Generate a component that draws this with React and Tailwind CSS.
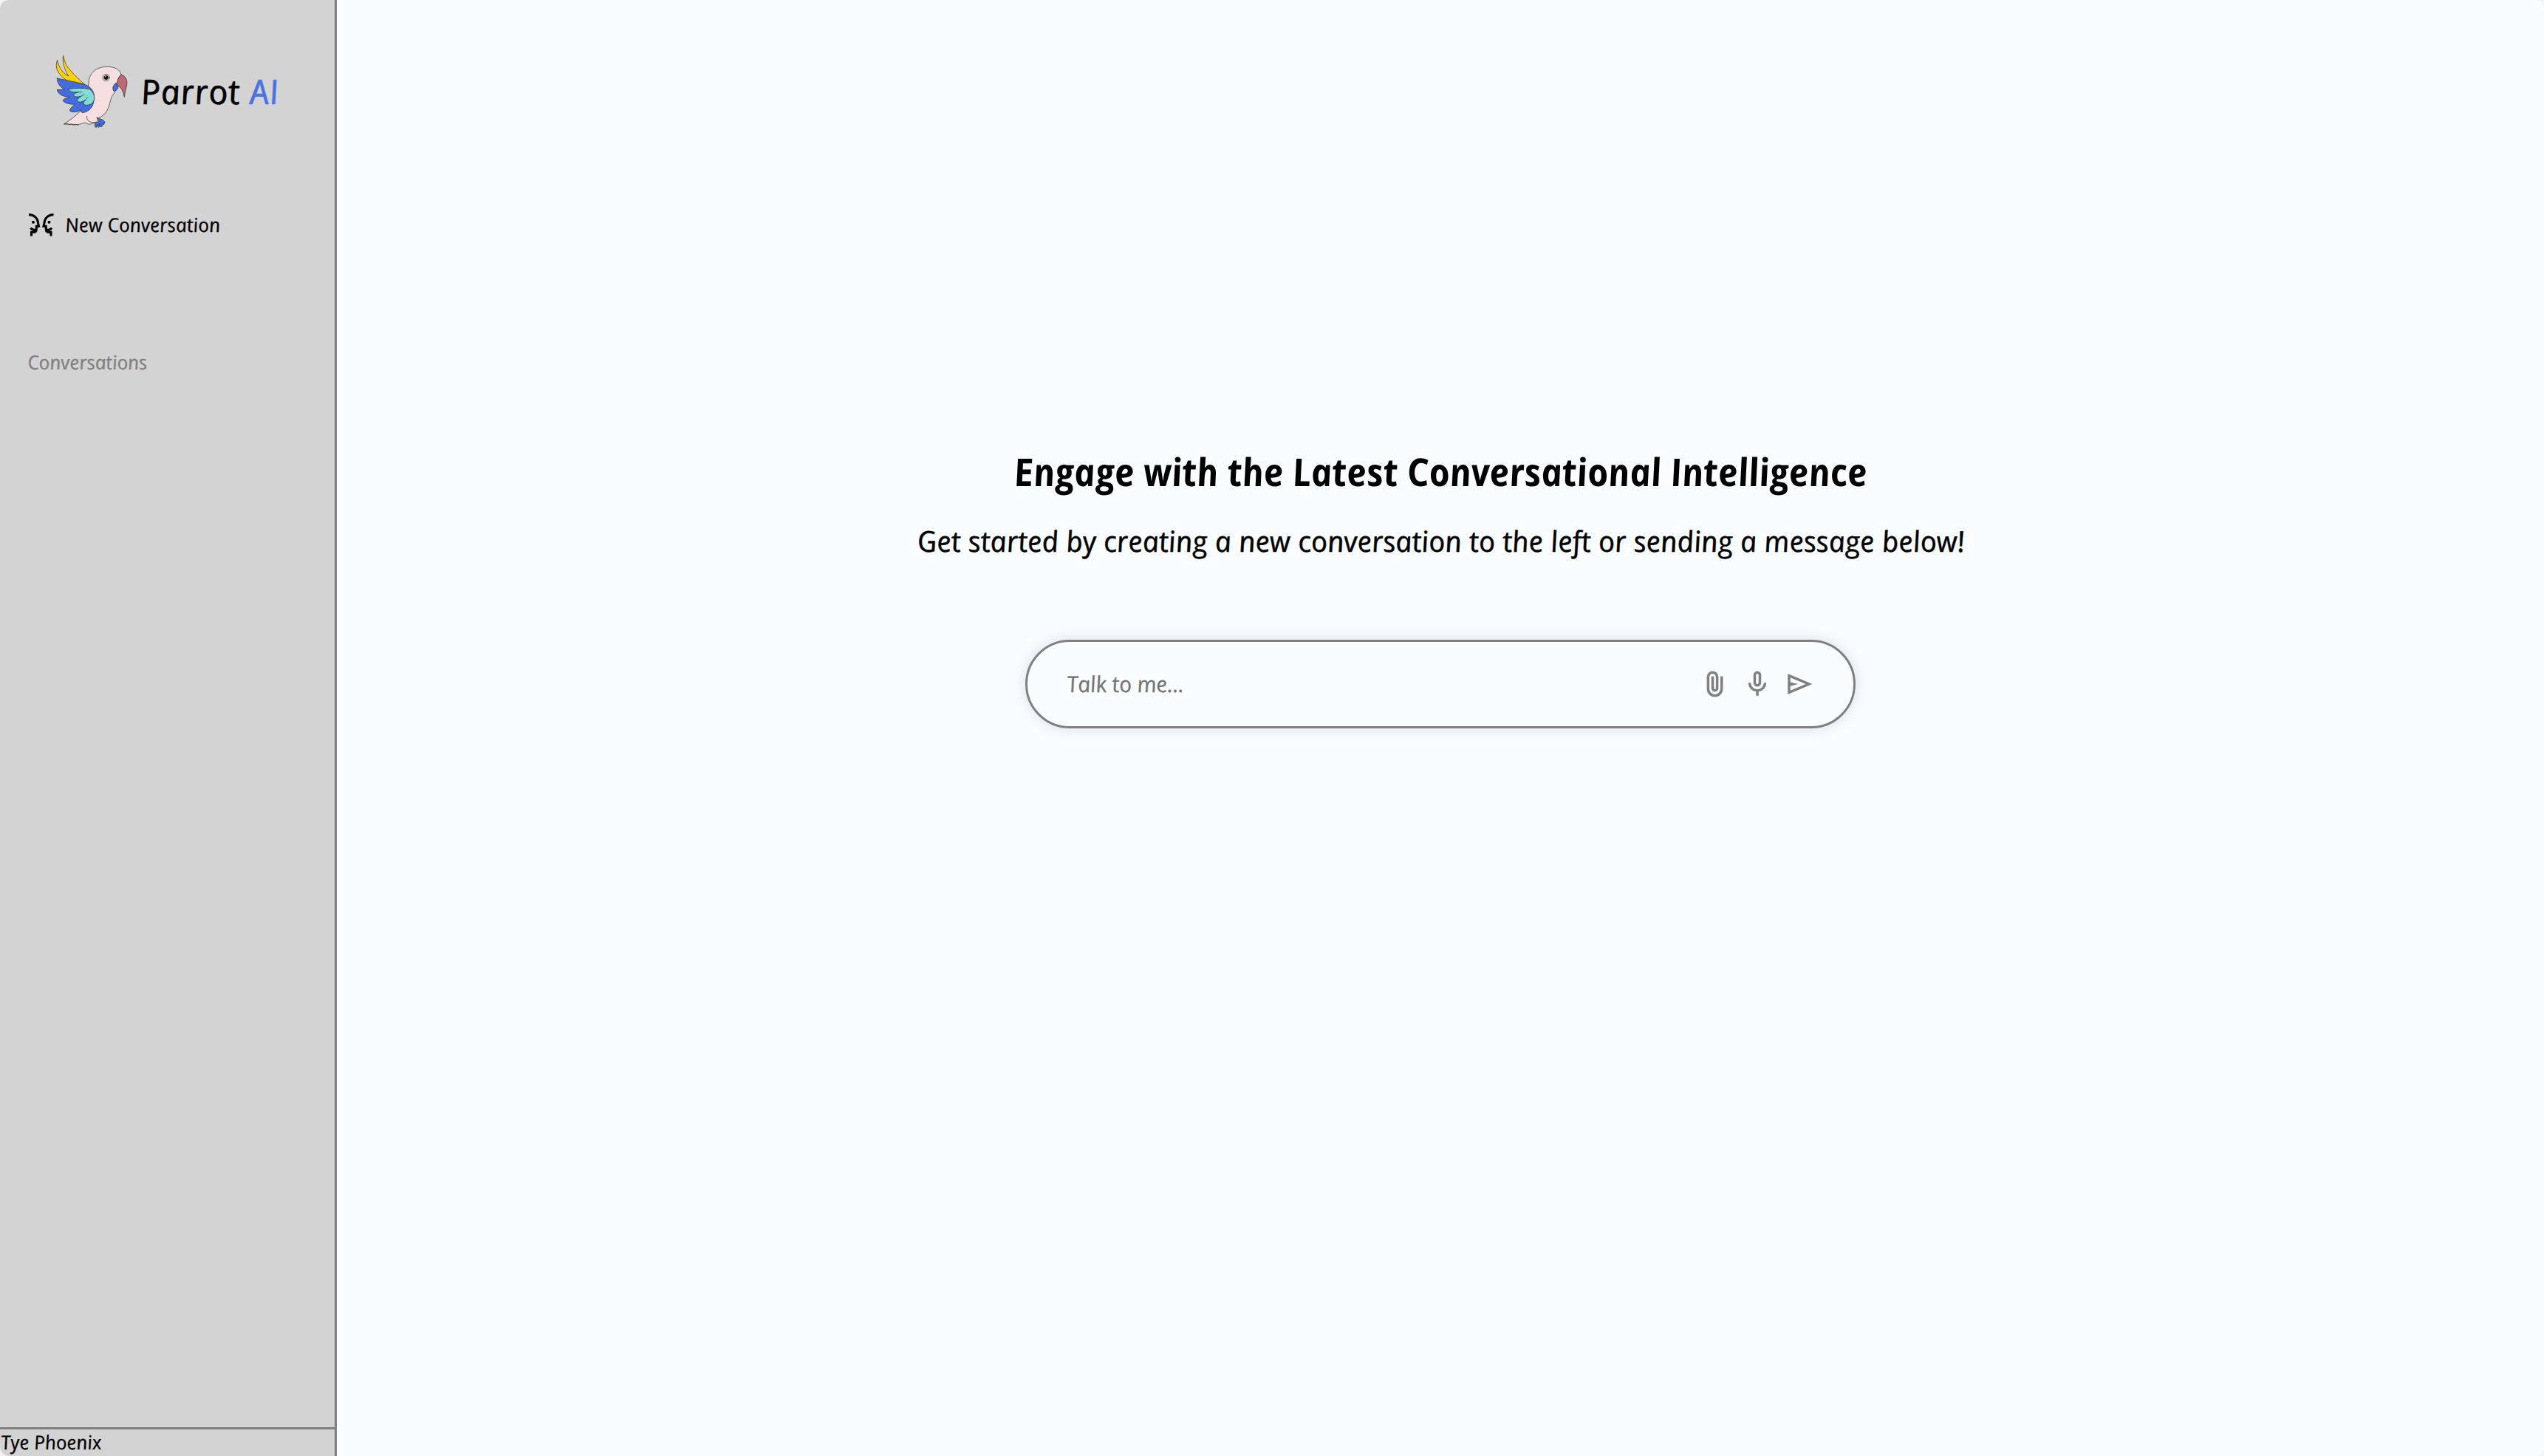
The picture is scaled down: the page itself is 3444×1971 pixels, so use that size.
import React from "react";

function Text({ children, className }) {
  return (
    <span className={"inline-block whitespace-nowrap italic skew-x-[9deg] " + className}>
      {children}
    </span>
  );
}

function Parrot() {
  return (
    <svg viewBox="0 0 390 375" className="block h-[125px] w-[130px]" stroke="#33312f" strokeWidth="2.2" strokeLinejoin="round" strokeLinecap="round">
      <path fill="#f5dfe1" d="M180 162C178 122 205 91 256 91C288 91 309 104 312 124C300 134 297 146 299 158C297 180 283 199 274 212C266 232 266 246 258 262C247 284 232 297 214 299C220 307 216 314 206 317C190 326 177 327 166 318C144 325 132 328 118 325L80 324C104 309 128 290 146 272Z" />
      <path fill="none" d="M173 292C171 306 178 314 194 317L208 317M80 324Q94 318 100 327Q110 320 118 328Q128 321 138 328" />
      <path fill="#ffd20a" d="M162 162L98 151C72 135 48 112 49 86Q49 72 53 64C58 92 74 118 98 129C81 102 72 70 77 46C83 76 92 92 106 106C126 129 144 145 162 162Z" />
      <path fill="#426ce0" d="M52 138C90 147 142 154 172 166C195 178 205 199 202 220C202 252 182 276 154 278C149 275 149 271 149 266C135 277 111 277 104 270C102 262 116 251 124 243C104 246 78 237 76 228C77 221 91 218 104 214C78 214 53 202 52 184L82 184C65 174 51 157 52 138Z" />
      <path fill="#84dbd4" d="M97 182Q146 174 184 182C205 199 208 220 198 235C192 245 173 250 162 245C157 240 160 233 168 225C154 236 137 237 134 229C133 222 142 217 151 210C135 215 120 214 119 206C120 199 128 198 139 194C122 196 104 193 97 182Z" />
      <path fill="none" d="M168 225L176 215M151 210L162 202M139 194L152 194" />
      <path fill="#426ce0" d="M291 157C278 166 275 181 282 190C293 190 301 181 300 166Z" />
      <path fill="#b96977" d="M312 124C331 125 341 151 333 174C330 187 327 199 325 214C320 193 315 174 294 166C295 146 303 131 312 124Z" />
      <circle cx="251" cy="135" r="14" fill="#eee8e6" />
      <circle cx="251" cy="135" r="8.5" fill="#111" />
      <circle cx="248" cy="131" r="2" fill="#fff" stroke="none" />
      <path fill="#426ce0" d="M214 299C226 303 239 304 245 314C245 322 243 326 240 327L237 319L234 335Q228 337 226 331L224 321L223 336Q218 338 216 334L215 324L211 337Q206 338 205 331C204 322 208 316 216 316C224 313 222 307 214 299Z" />
    </svg>
  );
}

function FacesIcon() {
  return (
    <svg viewBox="0 0 34 31" className="block h-[31px] w-[34px]" fill="none" stroke="#000" strokeWidth="3.1">
      <g id="face">
        <path d="M0 1.6C8 1.6 12 7 12.500 12.500L13.500 17.300H10.300V21Q10.300 25.200 7 25.200H3.500V30.500" />
        <path d="M2.500 19.500Q4.500 22.800 9.500 22.300" />
        <circle cx="6" cy="11.8" r="2" fill="#000" stroke="none" />
      </g>
      <use href="#face" transform="matrix(-1 0 0 1 33.500 0)" />
    </svg>
  );
}

function Symbol({ d }) {
  return (
    <svg viewBox="0 -960 960 960" className="block size-[42px] fill-[#808080]">
      <path d={d} />
    </svg>
  );
}

const ATTACH = "M720-330q0 104-73 177T470-80q-104 0-177-73t-73-177v-370q0-75 52.5-127.5T400-880q75 0 127.500 52.500T580-700v350q0 46-32 78t-78 32q-46 0-78-32t-32-78v-370h80v370q0 13 8.500 21.500T470-320q13 0 21.500-8.500T500-350v-350q-1-42-29.500-71T400-800q-42 0-71 29t-29 71v370q-1 71 49 120.500T470-160q70 0 119-49.500T640-330v-390h80v390Z";
const MIC = "M480-400q-50 0-85-35t-35-85v-240q0-50 35-85t85-35q50 0 85 35t35 85v240q0 50-35 85t-85 35Zm0-240Zm-40 520v-123q-104-14-172-93t-68-184h80q0 83 58.500 141.500T480-320q83 0 141.500-58.500T680-520h80q0 105-68 184t-172 93v123h-80Zm40-360q17 0 28.500-11.500T520-520v-240q0-17-11.500-28.500T480-800q-17 0-28.500 11.500T440-760v240q0 17 11.500 28.500T480-480Z";
const SEND = "M120-160v-640l760 320-760 320Zm80-120 474-200-474-200v140l240 60-240 60v140Zm0 0v-400 400Z";

export default function App() {
  return (
    <div className="h-[1971px] w-[3444px] bg-[#f4f4f4] font-['Open_Sans',sans-serif] text-black">
      <div className="flex h-full w-full overflow-hidden rounded-[12px] bg-[#fafdff]">
        <aside className="flex h-full w-[456px] shrink-0 flex-col border-r-[3px] border-[#808080] bg-[#d3d3d3]">
          <div className="mt-[60px] flex h-[125px] items-center pl-[60px]">
            <Parrot />
            <Text className="text-[46px] leading-[60px] tracking-[0.8px] [-webkit-text-stroke:0.7px]">
              Parrot <span className="text-[#4a73e2]">AI</span>
            </Text>
          </div>
          <div className="mt-[99px] flex h-[40px] items-center pl-[39px]">
            <FacesIcon />
            <Text className="ml-[15px] text-[26px] leading-[40px] tracking-[0.15px] [-webkit-text-stroke:0.3px]">New Conversation</Text>
          </div>
          <div className="mt-[146px] flex h-[40px] items-center pl-[37px]">
            <Text className="text-[26px] leading-[40px] text-[#808080] [-webkit-text-stroke:0.3px]">Conversations</Text>
          </div>
          <div className="mt-auto flex h-[39px] items-start border-t-[3px] border-[#808080] pl-px">
            <Text className="text-[26px] leading-[34px] [-webkit-text-stroke:0.3px]">Tye Phoenix</Text>
          </div>
        </aside>
        <main className="flex min-w-0 flex-1 flex-col items-center pt-[598px]">
          <h1 className="h-[80px] leading-[80px]">
            <Text className="scale-x-[0.926] text-[52px] font-bold">Engage with the Latest Conversational Intelligence</Text>
          </h1>
          <p className="mt-[24px] h-[60px] leading-[60px]">
            <Text className="text-[39px] tracking-[0.06px] [-webkit-text-stroke:0.5px]">Get started by creating a new conversation to the left or sending a message below!</Text>
          </p>
          <div className="mt-[104px] flex h-[120px] w-[1124px] items-center rounded-[60px] border-[3px] border-[#808080] bg-[#fafdff] pl-[53px] pr-[52px] shadow-[0_0_20px_rgba(0,0,0,0.12)]">
            <Text className="text-[30px] leading-[40px] tracking-[-0.2px] text-[#757575] [-webkit-text-stroke:0.3px]">Talk to me...</Text>
            <div className="ml-auto flex items-center gap-[15px]">
              <Symbol d={ATTACH} />
              <Symbol d={MIC} />
              <Symbol d={SEND} />
            </div>
          </div>
        </main>
      </div>
    </div>
  );
}
